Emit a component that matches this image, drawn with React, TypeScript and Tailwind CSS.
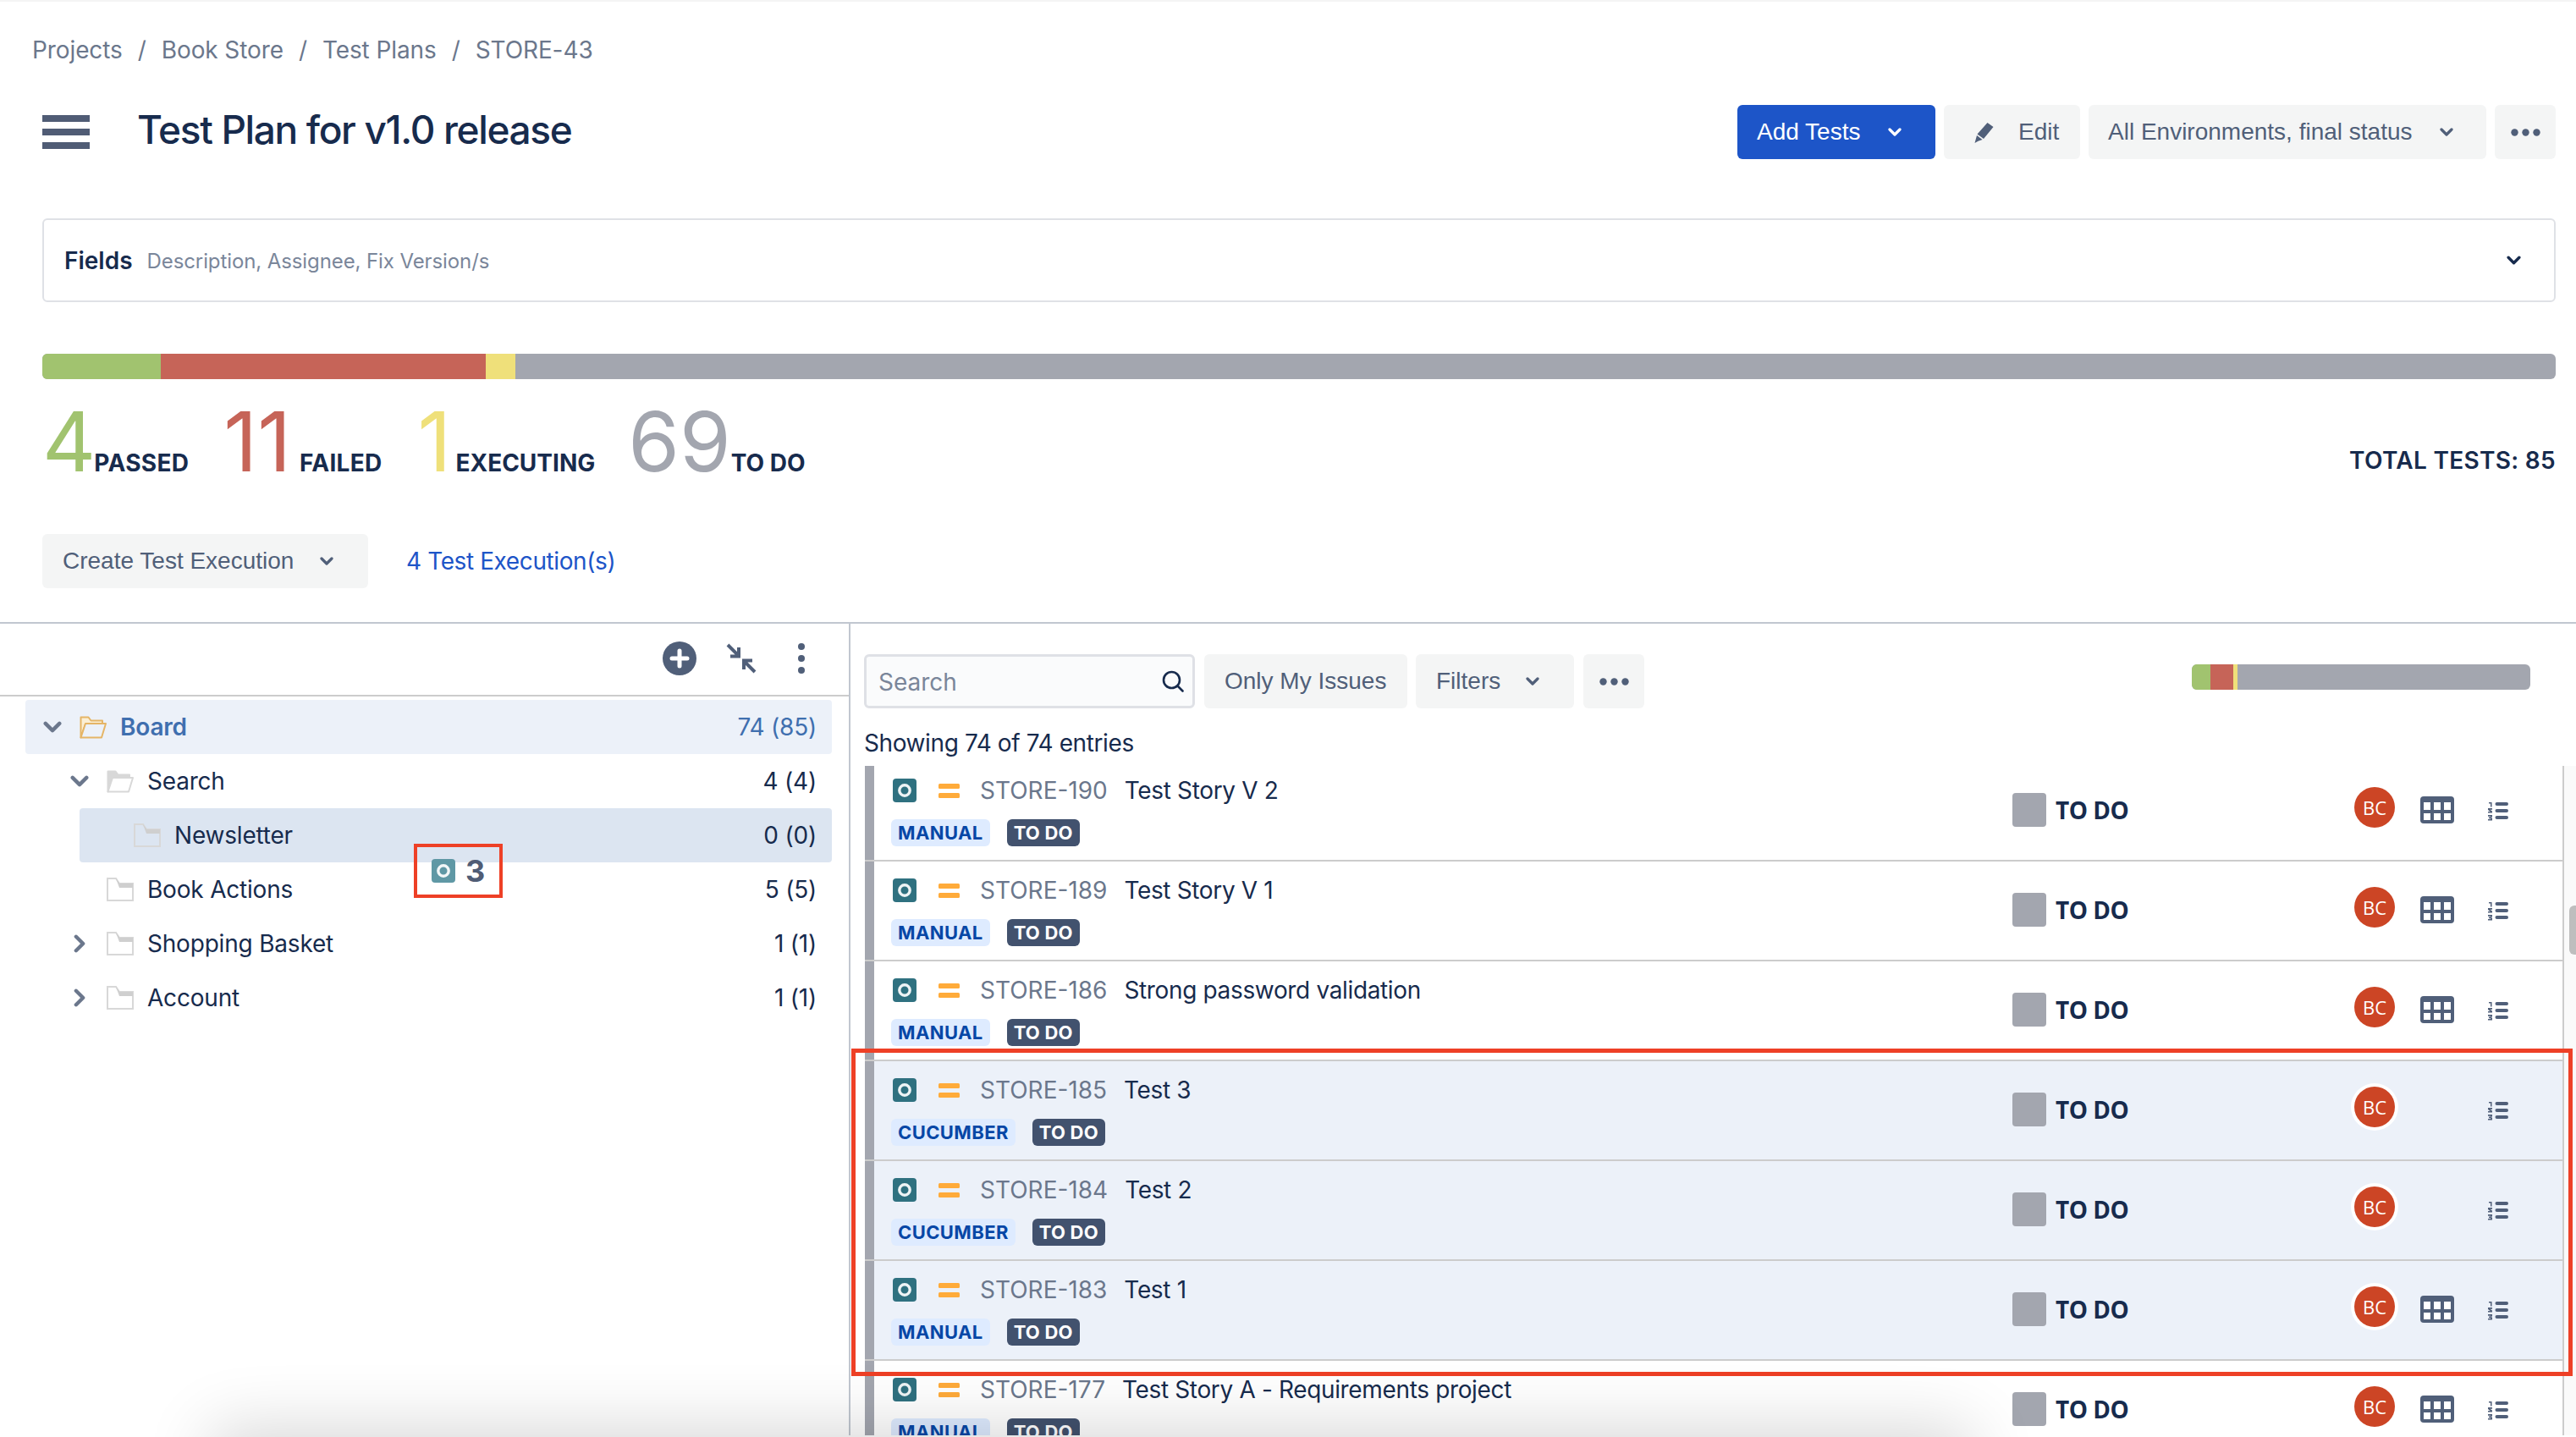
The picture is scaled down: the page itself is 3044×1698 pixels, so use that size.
import type { ReactNode } from "react";

interface TreeNode {
  label: string;
  count: string;
  indent: string;
  chevron?: "down" | "right";
  folder: "open" | "closed";
  rowClass?: string;
  textClass?: string;
  active?: boolean;
}

interface TestRow {
  id: string;
  title: string;
  kind: "MANUAL" | "CUCUMBER";
  selected?: boolean;
  noDataset?: boolean;
}

const treeNodes: TreeNode[] = [
  { label: "Board", count: "74 (85)", indent: "ml-[30px]", chevron: "down", folder: "open", rowClass: "bg-[#ecf1f9]", textClass: "text-[#3f6faf]", active: true },
  { label: "Search", count: "4 (4)", indent: "ml-[62px]", chevron: "down", folder: "open" },
  { label: "Newsletter", count: "0 (0)", indent: "ml-[94px]", folder: "closed", rowClass: "bg-[#dce5f1]" },
  { label: "Book Actions", count: "5 (5)", indent: "ml-[62px]", folder: "closed" },
  { label: "Shopping Basket", count: "1 (1)", indent: "ml-[62px]", chevron: "right", folder: "closed" },
  { label: "Account", count: "1 (1)", indent: "ml-[62px]", chevron: "right", folder: "closed" },
];

const testRows: TestRow[] = [
  { id: "STORE-190", title: "Test Story V 2", kind: "MANUAL" },
  { id: "STORE-189", title: "Test Story V 1", kind: "MANUAL" },
  { id: "STORE-186", title: "Strong password validation", kind: "MANUAL" },
  { id: "STORE-185", title: "Test 3", kind: "CUCUMBER", selected: true, noDataset: true },
  { id: "STORE-184", title: "Test 2", kind: "CUCUMBER", selected: true, noDataset: true },
  { id: "STORE-183", title: "Test 1", kind: "MANUAL", selected: true },
  { id: "STORE-177", title: "Test Story A - Requirements project", kind: "MANUAL" },
];

const stats = [
  { value: "4", label: "PASSED", color: "text-[#a1c36f]", gap: "ml-0", labelGap: "-ml-[2px] tracking-[0.3px]" },
  { value: "11", label: "FAILED", color: "text-[#c66458]", gap: "ml-[41px]", labelGap: "ml-[10px] tracking-[0.3px]" },
  { value: "1", label: "EXECUTING", color: "text-[#efe07a]", gap: "ml-[42px]", labelGap: "ml-[5px]" },
  { value: "69", label: "TO DO", color: "text-[#a3a6af]", gap: "ml-[39px]", labelGap: "ml-0" },
];

const Chevron = ({ className }: { className: string }) => (
  <svg viewBox="0 0 16 10" fill="none" stroke="currentColor" strokeWidth="3.2" strokeLinecap="round" strokeLinejoin="round" className={className}>
    <path d="M2 2l6 6 6-6" />
  </svg>
);

const Dots = () => (
  <svg viewBox="0 0 35 9" fill="currentColor" className="h-[9px] w-[35px]">
    <circle cx="4.5" cy="4.5" r="4.2" />
    <circle cx="17.5" cy="4.5" r="4.2" />
    <circle cx="30.5" cy="4.5" r="4.2" />
  </svg>
);

const TestIcon = ({ className }: { className: string }) => (
  <svg viewBox="0 0 28 28" className={className}>
    <rect width="28" height="28" rx="4" fill="currentColor" />
    <circle cx="14" cy="14" r="6.2" fill="none" stroke="#fff" strokeWidth="3.4" opacity="0.92" />
  </svg>
);

const PriorityIcon = () => (
  <svg viewBox="0 0 25 17" fill="#ffab3a" className="h-[17px] w-[25px]">
    <rect width="25" height="6" rx="1.5" />
    <rect y="11" width="25" height="6" rx="1.5" />
  </svg>
);

const TableIcon = () => (
  <svg viewBox="0 0 40 32" className="h-[32px] w-[40px]">
    <rect width="40" height="32" rx="4" fill="#505f79" />
    <g fill="#fff">
      <rect x="4" y="7" width="8" height="9" />
      <rect x="16" y="7" width="8" height="9" />
      <rect x="28" y="7" width="8" height="9" />
      <rect x="4" y="20" width="8" height="8" />
      <rect x="16" y="20" width="8" height="8" />
      <rect x="28" y="20" width="8" height="8" />
    </g>
  </svg>
);

const StepsIcon = () => (
  <svg viewBox="0 0 24 23" className="h-[23px] w-[24px]" fill="#505f79">
    <rect x="8.5" y="1" width="15.5" height="4" rx="2" />
    <rect x="8.5" y="9" width="15.5" height="4" rx="2" />
    <rect x="8.5" y="17" width="15.5" height="4" rx="2" />
    <path d="M1 1h3.5v5.5H3V2.5H1zM0 8h5v1.8H2.4L5 11.6v1.9H0v-1.6h2.6L0 10zM0 16h5v2l-1 1 1 1v2.5H0V21h3.2v-.8H1v-1.7h2.2v-.8H0z" />
  </svg>
);

const FolderIcon = ({ type, accent }: { type: "open" | "closed"; accent?: boolean }) => {
  const line = accent ? "#e5b567" : "#d8d8d8";
  if (type === "open") {
    return (
      <svg viewBox="0 0 32 27" fill="none" className="h-[27px] w-[32px] shrink-0">
        <path d="M1.5 25.5V1.5h9l3 4h13.5v4H7z" fill={accent ? "#fbefd5" : "#d8d8d8"} stroke={line} strokeWidth="2" strokeLinejoin="round" />
        <path d="M1.5 25.5L7 9h24l-5 16.5z" fill={accent ? "#ecf1f9" : "#fff"} stroke={line} strokeWidth="2" strokeLinejoin="round" />
      </svg>
    );
  }
  return (
    <svg viewBox="0 0 32 28" fill="none" className="h-[28px] w-[32px] shrink-0">
      <path d="M1 27V1h10l4 6h16v20z" stroke={line} strokeWidth="2" />
      <path d="M11 1l4.5 6H31v5H15z" fill="#cfcfcf" />
    </svg>
  );
};

const GreyButton = ({ className, children }: { className: string; children: ReactNode }) => (
  <div className={`flex h-[64px] items-center rounded-md bg-[#f4f5f5] [font-family:'Liberation_Sans',sans-serif] text-[28px] text-[#505f79] ${className}`}>{children}</div>
);

const ProgressBar = ({ widths, className }: { widths: string[]; className: string }) => (
  <div className={`flex overflow-hidden rounded-md bg-[#a3a6af] ${className}`}>
    <div className={`bg-[#a1c36f] ${widths[0]}`} />
    <div className={`bg-[#c66458] ${widths[1]}`} />
    <div className={`bg-[#efe07a] ${widths[2]}`} />
  </div>
);

const Row = ({ test, first }: { test: TestRow; first: boolean }) => (
  <div className={`border-b-2 border-[#cccccc] ${first ? "h-[113px]" : "h-[118px]"}`}>
    <div className={`flex h-full items-start border-l-[11px] border-[#a3a6af] ${first ? "pt-[15px]" : "pt-[20px]"} ${test.selected ? "bg-[#ecf1f9]" : ""}`}>
      <div className="w-[1345px] shrink-0 pl-[20px]">
        <div className="flex h-[28px] items-center pl-[2px] text-[28px]">
          <TestIcon className="h-[28px] w-[28px] text-[#2f7180]" />
          <div className="ml-[26px]">
            <PriorityIcon />
          </div>
          <span className="ml-[24px] text-[#6b778c]">{test.id}</span>
          <span className="ml-[20px] tracking-[-0.35px] text-[#172b4d]">{test.title}</span>
        </div>
        <div className="mt-[20px] flex gap-[20px] text-[22px] leading-[32px] font-bold">
          <span className="rounded-md bg-[#deebff] px-[8px] tracking-[0.4px] text-[#0747a6]">{test.kind}</span>
          <span className="rounded-md bg-[#42526e] px-[8px] tracking-[0.2px] text-white">TO DO</span>
        </div>
      </div>
      <div className="mt-[17px] flex w-[404px] shrink-0 items-center gap-[11px]">
        <div className="h-[40px] w-[40px] rounded-[4px] bg-[#a3a6af]" />
        <span className="[font-family:'Open_Sans',sans-serif] text-[28px] leading-[40px] font-bold tracking-[-0.5px] text-[#172b4d]">TO DO</span>
      </div>
      <div className={`mt-[10px] flex h-[48px] w-[48px] shrink-0 items-center justify-center rounded-full bg-[#cc4525] [font-family:'Open_Sans',sans-serif] text-[22px] text-white ${test.selected ? "ring-4 ring-white" : ""}`}>
        BC
      </div>
      <div className="mt-[21px] ml-[30px] h-[32px] w-[40px] shrink-0">{!test.noDataset && <TableIcon />}</div>
      <div className="mt-[27px] ml-[40px] shrink-0">
        <StepsIcon />
      </div>
    </div>
  </div>
);

export default function App() {
  return (
    <div className="relative h-[1698px] w-[3044px] overflow-hidden border-t-2 border-[#f4f4f4] bg-white [font-family:Inter,sans-serif] text-[#172b4d]">
      {/* Breadcrumb */}
      <div className="flex h-[114px] items-center gap-[18px] pl-[38px] text-[28px] tracking-[-0.1px] text-[#6b778c]">
        <span>Projects</span>
        <span>/</span>
        <span>Book Store</span>
        <span>/</span>
        <span>Test Plans</span>
        <span>/</span>
        <span>STORE-43</span>
      </div>

      <div className="px-[50px] pr-[24px]">
        {/* Header */}
        <div className="mt-[8px] flex h-[64px] items-center">
          <div className="flex h-[40px] w-[56px] flex-col justify-between">
            <div className="h-[8px] bg-[#505c75]" />
            <div className="h-[8px] bg-[#505c75]" />
            <div className="h-[8px] bg-[#505c75]" />
          </div>
          <h1 className="mb-[6px] ml-[56px] text-[46px] leading-none font-medium tracking-[-1.35px] text-[#172b4d]">Test Plan for v1.0 release</h1>
          <div className="ml-auto flex gap-[10px]">
            <div className="flex h-[64px] w-[234px] items-center rounded-md bg-[#1d55c8] pl-[23px] [font-family:'Liberation_Sans',sans-serif] text-[28px] text-white">
              Add Tests
              <Chevron className="ml-[33px] h-[10px] w-[16px]" />
            </div>
            <GreyButton className="w-[161px] pl-[35px]">
              <svg viewBox="0 0 25 25" fill="currentColor" className="h-[25px] w-[25px]">
                <path d="M16.5 1l7 5-11.5 14-7.500-5.500zM4 16l6.500 5-5 1.800L1.500 25z" />
              </svg>
              <span className="ml-[28px]">Edit</span>
            </GreyButton>
            <GreyButton className="w-[470px] pl-[23px]">
              All Environments, final status
              <Chevron className="ml-[32px] h-[10px] w-[16px]" />
            </GreyButton>
            <GreyButton className="w-[72px] justify-center">
              <Dots />
            </GreyButton>
          </div>
        </div>

        {/* Fields */}
        <div className="mt-[70px] flex h-[99px] items-center rounded-md border-2 border-[#dfe1e6] pr-[39px] pl-[24px]">
          <span className="text-[28px] font-semibold">Fields</span>
          <span className="mt-[2px] ml-[17px] text-[24px] tracking-[-0.1px] text-[#7a869a]">Description, Assignee, Fix Version/s</span>
          <Chevron className="ml-auto h-[11px] w-[17px] text-[#172b4d]" />
        </div>

        <ProgressBar widths={["w-[140px]", "w-[384px]", "w-[35px]"]} className="mt-[61px] h-[30px]" />

        {/* Stats */}
        <div className="mt-[26px] flex h-[96px] items-end justify-between">
          <div className="flex items-baseline">
            {stats.map((stat) => (
              <div key={stat.label} className={`flex items-baseline ${stat.gap}`}>
                <span className={`text-[98px] leading-[96px] ${stat.color}`}>{stat.value}</span>
                <span className={`text-[28px] leading-none font-bold text-[#172b4d] ${stat.labelGap}`}>{stat.label}</span>
              </div>
            ))}
          </div>
          <span className="pb-[12px] text-[28px] leading-none font-semibold tracking-[0.3px] text-[#172b4d]">TOTAL TESTS: 85</span>
        </div>

        <div className="mt-[61px] flex items-center">
          <GreyButton className="w-[385px] pl-[24px]">
            Create Test Execution
            <Chevron className="ml-[31px] h-[10px] w-[16px]" />
          </GreyButton>
          <span className="ml-[45px] text-[28px] tracking-[-0.4px] text-[#1d55c8]">4 Test Execution(s)</span>
        </div>
      </div>

      {/* Board */}
      <div className="mt-[40px] flex h-[961px] border-t-2 border-[#c1c7d0]">
        <div className="w-[1005px] shrink-0 border-r-2 border-[#c1c7d0]">
          <div className="flex h-[86px] items-center justify-end border-b-2 border-[#cccccc] pr-[44px] pb-[2px] text-[#505f79]">
            <svg viewBox="0 0 40 40" className="h-[40px] w-[40px]">
              <circle cx="20" cy="20" r="20" fill="#505f79" />
              <path d="M20 11v18M11 20h18" stroke="#fff" strokeWidth="5" strokeLinecap="round" />
            </svg>
            <svg viewBox="0 0 36 36" fill="none" stroke="currentColor" strokeWidth="4" className="ml-[35px] h-[36px] w-[36px]">
              <path d="M2 2l13 13M15 5v10.500H5M34 34L21 21M21 31V20.500h10" />
            </svg>
            <svg viewBox="0 0 24 40" fill="currentColor" className="ml-[41px] h-[40px] w-[24px]">
              <circle cx="12" cy="6" r="4" />
              <circle cx="12" cy="20" r="4" />
              <circle cx="12" cy="34" r="4" />
            </svg>
          </div>
          <div className="pt-[4px] pr-[20px]">
            {treeNodes.map((node) => (
              <div key={node.label} className={`flex h-[64px] items-center rounded-[4px] pr-[18px] text-[28px] tracking-[-0.2px] ${node.indent} ${node.rowClass ?? ""}`}>
                <div className="flex w-[64px] shrink-0 justify-center text-[#6b778c]">
                  {node.chevron === "down" && <Chevron className="h-[14px] w-[22px]" />}
                  {node.chevron === "right" && <Chevron className="h-[14px] w-[22px] -rotate-90" />}
                </div>
                <FolderIcon type={node.folder} accent={node.active} />
                <span className={`ml-[16px] ${node.active ? "font-semibold" : ""} ${node.textClass ?? ""}`}>{node.label}</span>
                <span className={`ml-auto ${node.textClass ?? ""}`}>{node.count}</span>
              </div>
            ))}
          </div>
        </div>

        <div className="min-w-0 flex-1">
          <div className="flex pt-[36px] pr-[54px] pl-[16px]">
            <div className="flex h-[64px] w-[391px] items-center justify-between rounded-md border-[3px] border-[#dfe1e6] bg-[#fafbfc] pr-[10px] pl-[14px] text-[28px] text-[#7a869a]">
              <span className="pt-[2px]">Search</span>
              <svg viewBox="0 0 26 26" fill="none" stroke="#172b4d" strokeWidth="2.600" strokeLinecap="round" className="h-[26px] w-[26px]">
                <circle cx="11.500" cy="11.500" r="9.500" />
                <path d="M18.500 18.500l6 6" />
              </svg>
            </div>
            <GreyButton className="ml-[11px] w-[240px] pl-[24px]">Only My Issues</GreyButton>
            <GreyButton className="ml-[10px] w-[187px] pl-[24px]">
              Filters
              <Chevron className="ml-[30px] h-[10px] w-[16px]" />
            </GreyButton>
            <GreyButton className="ml-[11px] w-[72px] justify-center">
              <Dots />
            </GreyButton>
            <ProgressBar widths={["w-[22px]", "w-[27px]", "w-[5px]"]} className="mt-[12px] ml-auto h-[30px] w-[400px]" />
          </div>
          <div className="mt-[24px] h-[44px] pl-[16px] text-[28px] leading-[34px] tracking-[-0.4px] text-[#172b4d]">Showing 74 of 74 entries</div>
          <div className="flex h-[791px] pl-[17px]">
            <div className="w-[2008px] shrink-0 overflow-hidden border-r-2 border-[#cccccc]">
              {testRows.map((test, index) => (
                <Row key={test.id} test={test} first={index === 0} />
              ))}
            </div>
            <div className="flex-1 bg-[#fafafa]">
              <div className="mt-[165px] ml-[6px] h-[58px] rounded-l-md bg-[#bebebe]" />
            </div>
          </div>
        </div>
      </div>

      {/* Drag badge over the tree */}
      <div className="absolute top-[995px] left-[489px] flex h-[64px] w-[105px] items-center border-4 border-[#ee4026] pl-[17px]">
        <TestIcon className="h-[28px] w-[28px] text-[#5f98a5]" />
        <span className="ml-[12px] text-[36px] leading-none font-bold text-[#505c75]">3</span>
      </div>

      {/* Selection outline */}
      <div className="pointer-events-none absolute top-[1237px] left-[1006px] h-[387px] w-[2034px] border-[5px] border-[#ee4026]" />

      {/* Shadow coming up from below the page */}
      <div className="pointer-events-none absolute top-[1726px] left-[290px] h-[60px] w-[2000px] shadow-[0_0_80px_40px_rgba(0,0,0,0.16)]" />
    </div>
  );
}
